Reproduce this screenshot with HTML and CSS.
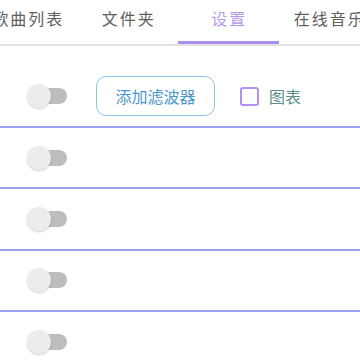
FILE: index.html
```html
<!DOCTYPE html>
<html lang="zh">
<head>
<meta charset="utf-8">
<link rel="stylesheet" href="styles.css">
</head>
<body>
<div class="tabs">
  <div class="tab-track">
    <div class="tab">歌曲列表</div>
    <div class="tab">文件夹</div>
    <div class="tab active">设置</div>
    <div class="tab">在线音乐</div>
  </div>
</div>
<div class="content">
  <div class="row">
    <span class="switch"><span class="thumb"></span></span>
    <button class="btn">添加滤波器</button>
    <label class="check"><span class="box"></span><span class="check-label">图表</span></label>
  </div>
  <div class="row"><span class="switch"><span class="thumb"></span></span></div>
  <div class="row"><span class="switch"><span class="thumb"></span></span></div>
  <div class="row"><span class="switch"><span class="thumb"></span></span></div>
  <div class="row"><span class="switch"><span class="thumb"></span></span></div>
</div>
</body>
</html>
```

FILE: styles.css
```css
html, body {
  margin: 0;
  padding: 0;
  background: #ffffff;
  font-family: "Noto Sans CJK SC", "Noto Sans", sans-serif;
  overflow: hidden;
  width: 360px;
  height: 360px;
}

.tabs {
  height: 44px;
  border-bottom: 2px solid #e2e2e2;
  overflow: hidden;
  position: relative;
}

.tab-track {
  display: flex;
  margin-left: -23px;
  height: 44px;
}

.tab {
  flex: 0 0 100.5px;
  height: 44px;
  box-sizing: border-box;
  display: flex;
  align-items: center;
  justify-content: center;
  padding-bottom: 8px;
  font-size: 16px;
  letter-spacing: 2px;
  text-indent: 2px;
  color: #5f5f5f;
  white-space: nowrap;
}

.tab.active {
  color: #b59ae8;
  border-bottom: 3px solid #a98ef0;
  padding-bottom: 5px;
}

.content {
  padding-top: 20px;
}

.row {
  height: 61.33px;
  box-sizing: border-box;
  border-bottom: 2px solid #9aa2ee;
  display: flex;
  align-items: center;
  padding-left: 27px;
}

.row:first-child {
  height: 62px;
}

.switch {
  position: relative;
  width: 40px;
  height: 24px;
  flex: 0 0 40px;
  display: block;
}

.switch::before {
  content: "";
  position: absolute;
  left: 4px;
  right: 0;
  top: 4px;
  height: 16px;
  border-radius: 8px;
  background: #bdbdbd;
}

.thumb {
  position: absolute;
  left: 0;
  top: 0;
  width: 24px;
  height: 24px;
  border-radius: 50%;
  background: #ececec;
  box-shadow: 0 1px 2px rgba(0, 0, 0, 0.18);
}

.btn {
  margin-left: 29px;
  width: 119px;
  height: 40px;
  border: 1px solid #8ec3ea;
  border-radius: 10px;
  background: #ffffff;
  color: #4d97d0;
  font-family: "Noto Sans CJK SC", "Noto Sans", sans-serif;
  font-size: 16px;
  padding: 0;
}

.check {
  display: flex;
  align-items: center;
  margin-left: 25px;
}

.box {
  width: 15px;
  height: 15px;
  border: 2px solid #b490f0;
  border-radius: 3px;
  box-sizing: content-box;
}

.check-label {
  margin-left: 10px;
  font-size: 16px;
  color: #5c8f88;
}
```
